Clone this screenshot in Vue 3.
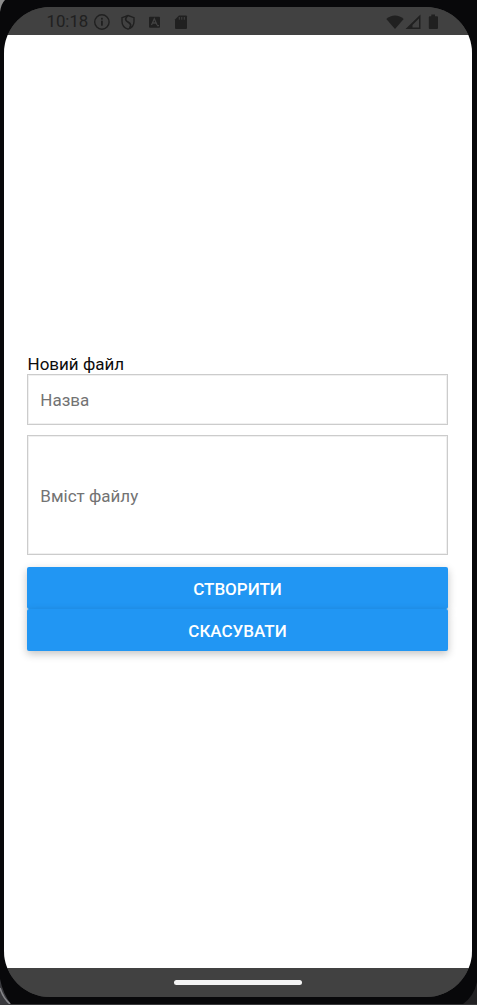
<script setup>
import { ref } from 'vue'

const name = ref('')
const content = ref('')
</script>

<template>
  <div class="device">
    <svg class="bezel" width="477" height="1005" viewBox="0 0 477 1005" fill="none">
      <path d="M0 0H5Q1 4 0 12Z" fill="#8b8b8b" />
      <path d="M0 979Q3 994 11 1004H0Z" fill="#39393d" />
      <path d="M0 988Q3 998 10 1004" stroke="#858589" stroke-width="1.6" />
      <path d="M477 982Q474 996 463 1004H477Z" fill="#222123" />
      <path d="M0 1004.5H477" stroke="#38383a" />
    </svg>
    <div class="screen">
      <header class="status">
        <span class="time">10:18</span>
        <svg class="left-icons" width="96" height="18" viewBox="0 0 96 18">
          <g fill="none" stroke="#202020" stroke-width="1.4">
            <circle cx="8.9" cy="9" r="7.2" />
            <path d="M35 2.5L41 4.7V8.5C41 12.3 38.5 15 35 16.2C31.5 15 29 12.3 29 8.5V4.7Z" />
            <path d="M34.5 3C31.5 6 32.5 7.5 35 9C38 10.8 38.5 12.5 36.5 15" stroke-width="1.7" />
          </g>
          <g fill="#202020">
            <rect x="8" y="7.7" width="1.8" height="5" />
            <rect x="8" y="4.8" width="1.8" height="1.8" />
            <rect x="56" y="3.7" width="11" height="11" rx="1" />
            <path d="M86 2.5H93Q94 2.5 94 3.5V15Q94 16 93 16H83Q82 16 82 15V6.5Z" />
          </g>
          <path d="M58.5 12L61.3 5.8L64.1 12M59.6 10H63M64 12.7H66" fill="none" stroke="#424242" stroke-width="1.3" />
          <path d="M86.3 4V6.7M88.8 4V6.7M91.3 4V6.7" stroke="#424242" stroke-width="1" />
        </svg>
        <svg class="right-icons" width="54" height="18" viewBox="0 0 54 18">
          <g fill="#202020">
            <path d="M.3 6C5 1.3 13 1.3 17.7 6L9 16Z" />
            <path fill-rule="evenodd" d="M34.5 1.5V16H19.5ZM33 5.5L26.5 12V14.5H33Z" />
            <path d="M45.3 1.5H49V3.2H51Q52 3.2 52 4.2V15Q52 16 51 16H43.8Q42.8 16 42.8 15V4.2Q42.8 3.2 43.8 3.2H45.3Z" />
          </g>
        </svg>
      </header>
      <main class="form">
        <div class="title">Новий файл</div>
        <input v-model="name" class="field" placeholder="Назва" />
        <input v-model="content" class="field tall" placeholder="Вміст файлу" />
        <button class="action">СТВОРИТИ</button>
        <button class="action">СКАСУВАТИ</button>
      </main>
      <footer class="nav"><span class="handle"></span></footer>
    </div>
  </div>
</template>

<style>
body {
  margin: 0;
  overflow: hidden;
}
</style>

<style scoped>
.device {
  position: relative;
  box-sizing: border-box;
  width: 477px;
  height: 1005px;
  padding: 7px 5px 8px 4px;
  background: #08080a;
  font-family: Roboto, "Noto Sans", sans-serif;
}
.bezel {
  position: absolute;
  left: 0;
  top: 0;
}
.screen {
  position: relative;
  display: flex;
  flex-direction: column;
  height: 990px;
  border-radius: 46px;
  overflow: hidden;
  background: linear-gradient(#414141 0 80px, #fff 80px 900px, #414141 900px);
}
.status {
  display: flex;
  align-items: flex-start;
  box-sizing: border-box;
  height: 28px;
  padding: 5px 32px 0 42.5px;
  background: #414141;
  color: #202020;
}
.time {
  width: 46px;
  font-size: 16.8px;
  line-height: 18px;
}
.left-icons {
  margin-top: .5px;
}
.right-icons {
  margin-left: auto;
  margin-top: .5px;
}
.form {
  flex: 1;
  display: flex;
  flex-direction: column;
  padding: 318px 24px 0 23px;
  background: #fff;
}
.title {
  height: 21px;
  padding-left: .5px;
  font-size: 17px;
  line-height: 22px;
  color: #0c0c0c;
}
.field {
  box-sizing: border-box;
  width: 100%;
  height: 51px;
  margin: 0 0 10px;
  padding: 1px 12.3px 0;
  border: 1px solid #ccc;
  border-radius: 0;
  outline: none;
  background: #fff;
  box-shadow: inset 0 0 0 1px #f0f0f0;
  font-family: inherit;
  font-size: 17px;
}
.field::placeholder {
  color: #737373;
  opacity: 1;
}
.tall {
  height: 120px;
  margin-bottom: 12px;
}
.action {
  height: 42px;
  padding: 2px 0 0;
  border: 0;
  border-radius: 2px;
  background: #2196f3;
  box-shadow: 0 3px 8px rgba(0, 0, 0, .24);
  color: #fff;
  font-family: inherit;
  font-size: 17px;
  font-weight: 500;
}
.nav {
  display: flex;
  justify-content: center;
  box-sizing: border-box;
  height: 29px;
  padding: 12px 1px 0 0;
  background: #414141;
}
.handle {
  width: 128px;
  height: 5px;
  border-radius: 3px;
  background: #f4f4f4;
}
</style>
